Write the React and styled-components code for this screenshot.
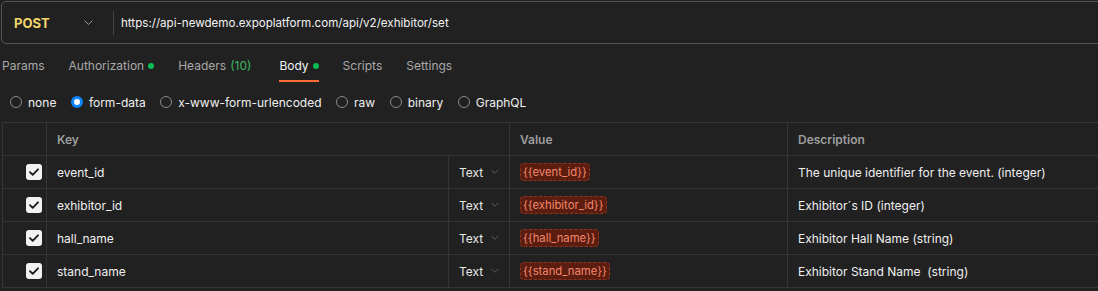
import React from "react";
import styled, { createGlobalStyle } from "styled-components";

const Global = createGlobalStyle`
  html, body { margin: 0; padding: 0; background: #212121; overflow: hidden; }
  body { font-family: Inter, "Noto Sans", "Liberation Sans", sans-serif; color: #e8e8e8; -webkit-font-smoothing: antialiased; }
  * { box-sizing: border-box; }
`;

const Page = styled.div`
  width: 1098px;
  height: 291px;
  overflow: hidden;
  padding-top: 1px;
`;

const UrlBar = styled.div`
  display: flex;
  align-items: center;
  height: 43px;
  margin-left: 1px;
  margin-right: -20px;
  border: 1px solid #555;
  border-radius: 5px;
  background: #212121;
`;

const Method = styled.div`
  display: flex;
  align-items: center;
  justify-content: space-between;
  width: 111px;
  padding: 0 20px 0 12px;
  font-size: 13px;
  font-weight: 700;
  color: #f4d66c;
`;

const Divider = styled.div`
  width: 1px;
  height: 24px;
  background: #444;
`;

const Url = styled.div`
  padding-left: 7px;
  font-size: 11.6px;
  color: #f2f2f2;
`;

const Tabs = styled.div`
  display: flex;
  gap: 24px;
  margin-top: 6px;
  padding-left: 2px;
`;

const Tab = styled.div`
  display: flex;
  align-items: center;
  gap: 4px;
  padding: 8px 0 6px;
  line-height: 16px;
  font-size: 12px;
  color: ${(p) => (p.$active ? "#f5f5f5" : "#a8a8a8")};
  border-bottom: 2px solid ${(p) => (p.$active ? "#ff6c37" : "transparent")};
  margin-right: ${(p) => p.$extra || 0}px;
`;

const Dot = styled.span`
  width: 6px;
  height: 6px;
  border-radius: 50%;
  background: #0cbb52;
`;

const Count = styled.span`
  color: #3fb95f;
`;

const Radios = styled.div`
  display: flex;
  align-items: center;
  gap: 14.5px;
  margin-top: 10px;
  padding-left: 10px;
  height: 20px;
`;

const RadioItem = styled.label`
  display: flex;
  align-items: center;
  gap: 6px;
  font-size: 12px;
  color: #f0f0f0;
`;

const RadioCircle = styled.span`
  width: 12px;
  height: 12px;
  border-radius: 50%;
  border: ${(p) => (p.$on ? "3px solid #0a84ff" : "1px solid #8a8a8a")};
  background: ${(p) => (p.$on ? "#fff" : "transparent")};
`;

const Table = styled.div`
  margin-top: 10px;
  margin-left: 2px;
  width: 1200px;
  border-top: 1px solid #353535;
  display: grid;
  grid-template-columns: 44px 402px 61px 278px 1fr;
  grid-auto-rows: 33px;
`;

const Cell = styled.div`
  display: flex;
  align-items: center;
  border-left: 1px solid #353535;
  border-bottom: 1px solid #353535;
  padding: 0 10px;
  font-size: 12px;
  color: #f0f0f0;
  white-space: pre;
  grid-column: ${(p) => p.$span || "auto"};
`;

const HeadCell = styled(Cell)`
  font-weight: 600;
  color: #9e9e9e;
`;

const CheckCell = styled(Cell)`
  justify-content: flex-end;
  padding: 0 4px 0 0;
`;

const Check = styled.span`
  width: 16px;
  height: 16px;
  border-radius: 3px;
  background: #f2f2f2;
  display: flex;
  align-items: center;
  justify-content: center;
`;

const TypeCell = styled(Cell)`
  gap: 8px;
  color: #e8e8e8;
`;

const Chip = styled.span`
  display: inline-flex;
  align-items: center;
  height: 18px;
  padding: 0 2px;
  border-radius: 4px;
  background: #5a1d10;
  border: 1px dashed #8a3422;
  color: #f4866a;
  font-size: 11.3px;
`;

const Chevron = ({ color = "#8a8a8a", w = 9 }) => (
  <svg width={w} height={w * 0.6} viewBox="0 0 10 6" fill="none">
    <path d="M1 1l4 4 4-4" stroke={color} strokeWidth="1.1" strokeLinecap="round" strokeLinejoin="round" />
  </svg>
);

const rows = [
  { key: "event_id", desc: "The unique identifier for the event. (integer)" },
  { key: "exhibitor_id", desc: "Exhibitor´s ID (integer)" },
  { key: "hall_name", desc: "Exhibitor Hall Name (string)" },
  { key: "stand_name", desc: "Exhibitor Stand Name  (string)" },
];

export default function App() {
  return (
    <Page>
      <Global />
      <UrlBar>
        <Method>
          POST
          <Chevron color="#9a9a9a" />
        </Method>
        <Divider />
        <Url>https://api-newdemo.expoplatform.com/api/v2/exhibitor/set</Url>
      </UrlBar>
      <Tabs>
        <Tab>Params</Tab>
        <Tab>Authorization<Dot /></Tab>
        <Tab $extra={4}>Headers <Count>(10)</Count></Tab>
        <Tab $active>Body<Dot /></Tab>
        <Tab>Scripts</Tab>
        <Tab>Settings</Tab>
      </Tabs>
      <Radios>
        {["none", "form-data", "x-www-form-urlencoded", "raw", "binary", "GraphQL"].map((r) => (
          <RadioItem key={r}>
            <RadioCircle $on={r === "form-data"} />
            {r}
          </RadioItem>
        ))}
      </Radios>
      <Table>
        <HeadCell />
        <HeadCell $span="span 2">Key</HeadCell>
        <HeadCell>Value</HeadCell>
        <HeadCell>Description</HeadCell>
        {rows.map((r) => (
          <React.Fragment key={r.key}>
            <CheckCell>
              <Check>
                <svg width="10" height="8" viewBox="0 0 10 8" fill="none">
                  <path d="M1 4.2l2.7 2.6L9 1.3" stroke="#1a1a1a" strokeWidth="1.8" strokeLinecap="round" strokeLinejoin="round" />
                </svg>
              </Check>
            </CheckCell>
            <Cell>{r.key}</Cell>
            <TypeCell>
              Text
              <Chevron color="#6a6a6a" />
            </TypeCell>
            <Cell>
              <Chip>{`{{${r.key}}}`}</Chip>
            </Cell>
            <Cell>{r.desc}</Cell>
          </React.Fragment>
        ))}
      </Table>
    </Page>
  );
}
